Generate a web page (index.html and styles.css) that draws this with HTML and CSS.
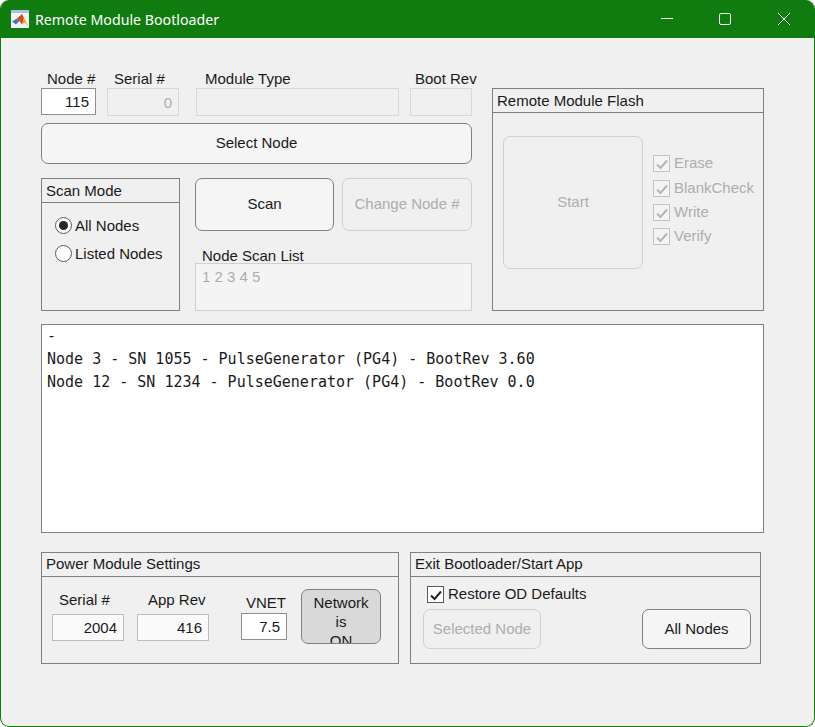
FILE: index.html
```html
<!DOCTYPE html>
<html lang="en">
<head>
<meta charset="UTF-8">
<meta name="viewport" content="width=device-width, initial-scale=1.0">
<title>Remote Module Bootloader</title>
<link rel="stylesheet" href="styles.css">
</head>
<body>
<div class="window">
    <div class="titlebar">
        <svg class="app-icon" viewBox="0 0 18 18" width="18" height="18">
            <rect width="18" height="18" fill="#f4f4f4"/>
            <rect width="18" height="3" fill="#a9c4e0"/>
            <path d="M1 11.5L6 8.5L8.5 11L5 14.5Z" fill="#3f79b5"/>
            <path d="M6 8.5L11 4L13 8L11 14.5L8.5 11Z" fill="#d9481c"/>
            <path d="M11 4L17 16L13.5 12.5L11 14.5L13 8Z" fill="#f2a31f"/>
        </svg>
        <span class="title">Remote Module Bootloader</span>
        <div class="window-buttons">
            <svg viewBox="0 0 14 14" width="14" height="14"><path d="M2 6.5H14" stroke="#fff" fill="none"/></svg>
            <svg viewBox="0 0 14 14" width="14" height="14"><rect x="1.5" y="1.5" width="11" height="11" rx="1.5" stroke="#fff" fill="none"/></svg>
            <svg viewBox="0 0 14 14" width="14" height="14"><path d="M1 1L13 13M13 1L1 13" stroke="#fff" fill="none"/></svg>
        </div>
    </div>

    <div class="content">
        <div class="top">
            <div class="left-col">
                <div class="fields">
                    <div class="field f-node">
                        <label>Node #</label>
                        <input class="box" type="text" value="115">
                    </div>
                    <div class="field f-serial">
                        <label>Serial #</label>
                        <input class="box off" type="text" value="0" disabled>
                    </div>
                    <div class="field f-type">
                        <label>Module Type</label>
                        <input class="box off" type="text" disabled>
                    </div>
                    <div class="field f-boot">
                        <label>Boot Rev</label>
                        <input class="box off" type="text" disabled>
                    </div>
                </div>
                <button class="btn select-node">Select Node</button>

                <div class="scan-row">
                    <div class="panel scan-mode">
                        <div class="panel-title">Scan Mode</div>
                        <div class="radios">
                            <div class="radio-row"><span class="radio on"></span>All Nodes</div>
                            <div class="radio-row"><span class="radio"></span>Listed Nodes</div>
                        </div>
                    </div>
                    <div class="scan-right">
                        <div class="scan-buttons">
                            <button class="btn scan">Scan</button>
                            <button class="btn change" disabled>Change Node #</button>
                        </div>
                        <label class="list-label">Node Scan List</label>
                        <div class="list-box">1 2 3 4 5</div>
                    </div>
                </div>
            </div>

            <div class="panel flash">
                <div class="panel-title">Remote Module Flash</div>
                <div class="flash-body">
                    <button class="btn start" disabled>Start</button>
                    <div class="checks">
                        <div class="check-row off"><span class="check"><svg viewBox="0 0 16 16" width="16" height="16"><path d="M3 8.5L6.5 12L13 4.5" stroke="#b5b5b5" stroke-width="2" fill="none"/></svg></span>Erase</div>
                        <div class="check-row off"><span class="check"><svg viewBox="0 0 16 16" width="16" height="16"><path d="M3 8.5L6.5 12L13 4.5" stroke="#b5b5b5" stroke-width="2" fill="none"/></svg></span>BlankCheck</div>
                        <div class="check-row off"><span class="check"><svg viewBox="0 0 16 16" width="16" height="16"><path d="M3 8.5L6.5 12L13 4.5" stroke="#b5b5b5" stroke-width="2" fill="none"/></svg></span>Write</div>
                        <div class="check-row off"><span class="check"><svg viewBox="0 0 16 16" width="16" height="16"><path d="M3 8.5L6.5 12L13 4.5" stroke="#b5b5b5" stroke-width="2" fill="none"/></svg></span>Verify</div>
                    </div>
                </div>
            </div>
        </div>

        <div class="log">-
Node 3 - SN 1055 - PulseGenerator (PG4) - BootRev 3.60
Node 12 - SN 1234 - PulseGenerator (PG4) - BootRev 0.0</div>

        <div class="bottom">
            <div class="panel power">
                <div class="panel-title">Power Module Settings</div>
                <div class="power-body">
                    <div class="field p-serial">
                        <label>Serial #</label>
                        <input class="box dim" type="text" value="2004" readonly>
                    </div>
                    <div class="field p-rev">
                        <label>App Rev</label>
                        <input class="box dim" type="text" value="416" readonly>
                    </div>
                    <div class="field p-vnet">
                        <label>VNET</label>
                        <input class="box" type="text" value="7.5">
                    </div>
                    <button class="btn network"><span>Network<br>is<br>ON</span></button>
                </div>
            </div>
            <div class="panel exit">
                <div class="panel-title">Exit Bootloader/Start App</div>
                <div class="exit-body">
                    <div class="check-row restore"><span class="check"><svg viewBox="0 0 16 16" width="16" height="16"><path d="M3 8.5L6.5 12L13 4.5" stroke="#262626" stroke-width="2" fill="none"/></svg></span>Restore OD Defaults</div>
                    <div class="exit-buttons">
                        <button class="btn selected" disabled>Selected Node</button>
                        <button class="btn all">All Nodes</button>
                    </div>
                </div>
            </div>
        </div>
    </div>
</div>
</body>
</html>
```

FILE: styles.css
```css
html, body {
    margin: 0;
    padding: 0;
    background-color: #fff;
}
body {
    width: 815px;
    height: 727px;
    overflow: hidden;
    font-family: "Liberation Sans", Arial, sans-serif;
    font-size: 15px;
    color: #1a1a1a;
}
* {
    box-sizing: border-box;
}
.window {
    width: 815px;
    height: 727px;
    background-color: #f0f0f0;
    border: 1px solid #107c10;
    border-top: 0;
    border-radius: 9px;
    overflow: hidden;
    display: flex;
    flex-direction: column;
}
.titlebar {
    height: 38px;
    flex: none;
    background-color: #107c10;
    display: flex;
    align-items: center;
    color: #fff;
    padding-left: 10px;
}
.app-icon {
    flex: none;
}
.title {
    margin-left: 6px;
    font-family: "Noto Sans", sans-serif;
    font-size: 14.2px;
}
.window-buttons {
    margin-left: auto;
    margin-right: 23px;
    display: flex;
    gap: 45px;
}
.window-buttons svg {
    display: block;
}
.content {
    padding: 33px 50px 0 40px;
}
.top {
    display: flex;
    gap: 20px;
    height: 240px;
}
.left-col {
    width: 431px;
}
.fields {
    display: grid;
    grid-template-columns: 55px 72px 209px 62px;
    column-gap: 11px;
}
.f-type {
    margin-left: 6px;
}
.field label {
    display: block;
    height: 17px;
    line-height: 15px;
    white-space: nowrap;
}
.box {
    display: block;
    width: 100%;
    height: 27px;
    border: 1px solid #8f8f8f;
    background-color: #fff;
    padding: 0 6px;
    margin: 0;
    font-family: inherit;
    font-size: 15px;
    color: #1a1a1a;
    text-align: right;
    border-radius: 0;
    outline: none;
}
.box.off {
    background-color: #f0f0f0;
    border-color: #d8d8d8;
    color: #adadad;
    height: 28px;
}
.box.dim {
    background-color: #fafafa;
    border-color: #bdbdbd;
}
.f-node label { padding-left: 6px; }
.f-serial label { padding-left: 7px; }
.f-type label { padding-left: 9px; }
.f-boot label { padding-left: 5px; }
.btn {
    display: block;
    background-color: #f5f5f5;
    border: 1px solid #808080;
    border-radius: 7px;
    font-family: inherit;
    font-size: 15px;
    color: #1a1a1a;
    padding: 0 0 2px;
}
.btn:disabled {
    background-color: #f0f0f0;
    border-color: #d0d0d0;
    color: #adadad;
}
.select-node {
    width: 431px;
    height: 41px;
    margin-top: 7px;
}
.scan-row {
    display: flex;
    gap: 15px;
    margin-top: 14px;
}
.panel {
    border: 1px solid #808080;
    background-color: #f0f0f0;
}
.panel-title {
    height: 24px;
    line-height: 24px;
    padding-left: 4px;
    border-bottom: 1px solid #808080;
}
.power .panel-title, .exit .panel-title {
    line-height: 22px;
}
.scan-mode {
    width: 139px;
    height: 133px;
}
.radios {
    padding: 13px 0 0 13px;
}
.radio-row {
    display: flex;
    align-items: center;
    height: 18px;
    margin-bottom: 10px;
    gap: 3px;
    white-space: nowrap;
}
.radio {
    width: 17px;
    height: 17px;
    border: 1px solid #5a5a5a;
    border-radius: 50%;
    background-color: #fff;
    display: flex;
    align-items: center;
    justify-content: center;
}
.radio.on::after {
    content: "";
    width: 9px;
    height: 9px;
    border-radius: 50%;
    background-color: #262626;
}
.scan-right {
    width: 277px;
}
.scan-buttons {
    display: flex;
    gap: 8px;
}
.scan {
    width: 139px;
    height: 53px;
}
.change {
    width: 130px;
    height: 53px;
}
.list-label {
    display: block;
    height: 17px;
    line-height: 17px;
    margin-top: 16px;
    padding-left: 7px;
}
.list-box {
    height: 48px;
    margin-top: -1px;
    border: 1px solid #d0d0d0;
    background-color: #f4f4f4;
    color: #adadad;
    padding: 4px 6px;
}
.flash {
    width: 272px;
    height: 223px;
    margin-top: 17px;
}
.flash-body {
    display: flex;
    padding: 23px 0 0 10px;
    gap: 10px;
}
.start {
    width: 140px;
    height: 133px;
}
.checks {
    padding-top: 19px;
}
.check-row {
    display: flex;
    align-items: flex-start;
    gap: 4px;
    height: 17px;
    line-height: 15px;
    margin-bottom: 7px;
    white-space: nowrap;
}
.checks .check-row:first-child {
    margin-bottom: 8px;
}
.check-row.off {
    color: #adadad;
}
.check {
    width: 17px;
    height: 17px;
    border: 1px solid #c4c4c4;
    background-color: #f4f4f4;
    display: block;
}
.check svg {
    display: block;
}
.restore .check {
    border-color: #5a5a5a;
    background-color: #fff;
}
.log {
    width: 723px;
    height: 209px;
    margin-top: 13px;
    border: 1px solid #808080;
    background-color: #fff;
    padding: 0 5px;
    font-family: "DejaVu Sans Mono", monospace;
    font-size: 15px;
    line-height: 23px;
    white-space: pre;
}
.bottom {
    display: flex;
    gap: 11px;
    margin-top: 19px;
}
.power {
    width: 358px;
    height: 112px;
}
.exit {
    width: 351px;
    height: 112px;
}
.power-body {
    display: flex;
    align-items: flex-start;
    padding: 12px 0 0 10px;
}
.p-serial {
    width: 72px;
    margin-right: 13px;
    padding-top: 2px;
}
.p-rev {
    width: 72px;
    margin-right: 32px;
    padding-top: 2px;
}
.p-vnet {
    width: 46px;
    margin-right: 14px;
    padding-top: 5px;
}
.p-serial label { padding-left: 7px; line-height: 17px; }
.p-rev label { padding-left: 11px; line-height: 17px; }
.p-vnet label { padding-left: 5px; line-height: 17px; }
.p-serial .box, .p-rev .box {
    margin-top: 6px;
}
.p-vnet .box {
    margin-top: 2px;
}
.network {
    width: 80px;
    height: 55px;
    background-color: #d9d9d9;
    overflow: hidden;
    padding: 3px 0 0;
    line-height: 19px;
}
.network span {
    display: block;
    height: 50px;
    overflow: hidden;
}
.exit-body {
    padding: 9px 9px 0 12px;
}
.restore {
    margin: 0 0 6px 4px;
}
.exit-buttons {
    display: flex;
    justify-content: space-between;
}
.selected {
    width: 118px;
    height: 40px;
}
.all {
    width: 109px;
    height: 40px;
}
```
